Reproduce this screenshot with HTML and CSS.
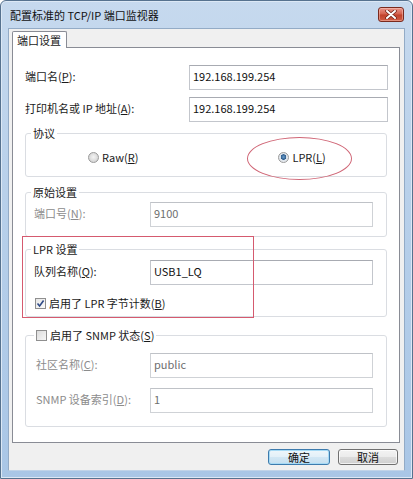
FILE: index.html
```html
<!DOCTYPE html>
<html lang="zh-CN">
<head>
<meta charset="utf-8">
<title>配置标准的 TCP/IP 端口监视器</title>
<link rel="stylesheet" href="styles.css">
</head>
<body>
<div class="window">
  <div class="titlebar">
    <span class="title">配置标准的 TCP/IP 端口监视器</span>
    <span class="close">
      <svg width="12" height="9" viewBox="0 0 12 9"><path d="M2 1 L10 8 M10 1 L2 8" stroke="#6a1d12" stroke-width="3.4" stroke-linecap="round"/><path d="M2 1 L10 8 M10 1 L2 8" stroke="#fff" stroke-width="2" stroke-linecap="round"/></svg>
    </span>
  </div>
  <div class="client">
    <div class="tabs"><div class="tab">端口设置</div></div>
    <div class="panel">
      <div class="row top-row">
        <label class="lbl wide">端口名(<u>P</u>):</label>
        <div class="input wide-input">192.168.199.254</div>
      </div>
      <div class="row top-row second">
        <label class="lbl wide">打印机名或 IP 地址(<u>A</u>):</label>
        <div class="input wide-input">192.168.199.254</div>
      </div>

      <div class="group g-proto">
        <span class="legend">协议</span>
        <div class="radios">
          <span class="opt raw"><span class="radio"></span>Raw(<u>R</u>)</span>
          <span class="opt lpr"><span class="radio on"></span>LPR(<u>L</u>)</span>
        </div>
      </div>

      <div class="group g-raw">
        <span class="legend">原始设置</span>
        <div class="row">
          <label class="lbl dis">端口号(<u>N</u>):</label>
          <div class="input dis">9100</div>
        </div>
      </div>

      <div class="group g-lpr">
        <span class="legend">LPR 设置</span>
        <div class="row">
          <label class="lbl">队列名称(<u>Q</u>):</label>
          <div class="input">USB1_LQ</div>
        </div>
        <div class="check-row">
          <span class="check on"><svg width="9" height="9" viewBox="0 0 9 9"><path d="M1.5 4.5 L3.6 7 L7.6 1.5" fill="none" stroke="#2f4a86" stroke-width="1.6"/></svg></span>启用了 LPR 字节计数(<u>B</u>)
        </div>
      </div>

      <div class="group g-snmp">
        <span class="legend check-legend"><span class="check"></span>启用了 SNMP 状态(<u>S</u>)</span>
        <div class="row">
          <label class="lbl dis">社区名称(<u>C</u>):</label>
          <div class="input dis">public</div>
        </div>
        <div class="row second">
          <label class="lbl dis">SNMP 设备索引(<u>D</u>):</label>
          <div class="input dis">1</div>
        </div>
      </div>

      <div class="mark-rect"></div>
      <div class="mark-ellipse"></div>
    </div>
    <div class="buttons">
      <button class="btn default">确定</button>
      <button class="btn">取消</button>
    </div>
  </div>
</div>
</body>
</html>
```
FILE: styles.css
```css
* { box-sizing: border-box; }
html, body { margin: 0; padding: 0; background: #fff; }
body {
  font-family: "Noto Sans CJK SC", "Noto Sans", sans-serif;
  font-size: 11px;
  color: #1a1a1a;
}
u { text-decoration: underline; text-underline-offset: 1px; }

.window {
  width: 413px;
  height: 479px;
  display: flex;
  flex-direction: column;
  background: linear-gradient(#c6d9ee, #b8d0ea 40%, #a9c6e6);
  border: 1px solid #56728f;
  border-radius: 6px 6px 0 0;
  box-shadow: inset 0 0 0 1px #dce8f5;
}

.titlebar {
  height: 27px;
  display: flex;
  align-items: center;
  justify-content: space-between;
  padding: 1px 8px 1px 9px;
}
.title { font-size: 11px; color: #111; line-height: 14px; }
.close {
  width: 26px;
  height: 15px;
  display: flex;
  align-items: center;
  justify-content: center;
  border: 1px solid #7a2a1e;
  border-radius: 3px;
  background: linear-gradient(#e8958a, #d4604b 48%, #c0412b 52%, #cf5c44);
  box-shadow: inset 0 0 0 1px rgba(255,210,200,0.45);
}

.client {
  margin: 0 7px;
  height: 443px;
  background: #f0f0f0;
  border: 1px solid #93abc6;
  border-bottom-color: #c0d3e8;
  display: flex;
  flex-direction: column;
}

.tabs {
  height: 18px;
  padding: 2px 0 0 3px;
  display: flex;
  align-items: flex-end;
}
.tab {
  height: 17px;
  margin-bottom: -1px;
  padding: 0 5px 0 4px;
  background: #fff;
  border: 1px solid #898c95;
  border-bottom: none;
  border-radius: 2px 2px 0 0;
  line-height: 16px;
  position: relative;
  z-index: 1;
}

.panel {
  position: relative;
  margin-left: 3px;
  width: 388px;
  height: 396px;
  background: #fff;
  border: 1px solid #898c95;
  padding: 17px 11px 0 12px;
}

.row { display: flex; align-items: flex-start; height: 25px; }
.row.second { margin-top: 7px; }
.lbl { width: 116px; padding-top: 3px; line-height: 16px; white-space: nowrap; }
.lbl.wide { width: 164px; }
.lbl.dis { color: #8c8c8c; }

.input {
  width: 223px;
  height: 25px;
  border: 1px solid #c3c6cc;
  border-top-color: #a8abb2;
  padding: 2px 0 0 3px;
  line-height: 16px;
  background: #fff;
  color: #111;
}
.input.wide-input { width: 199px; }
.input.dis { color: #6e6e6e; border-color: #cfd2d6; border-top-color: #bfc2c7; }

.group {
  position: relative;
  width: 362px;
  border: 1px solid #dadde2;
  border-radius: 3px;
  padding: 0 0 0 8px;
}
.legend {
  position: absolute;
  top: -9px;
  left: 5px;
  padding: 0 2px;
  background: #fff;
  line-height: 16px;
  display: flex;
  align-items: center;
}

.g-proto { margin-top: 11px; height: 44px; padding-top: 15px; padding-left: 0; }
.radios { display: flex; height: 16px; align-items: center; }
.opt { display: flex; align-items: center; line-height: 16px; }
.opt.raw { margin-left: 62px; }
.opt.lpr { margin-left: 140px; }
.radio {
  width: 11px;
  height: 11px;
  border-radius: 50%;
  border: 1px solid #9a9a9a;
  background: radial-gradient(circle at 50% 45%, #f4f4f4 0, #d6d6d6 70%);
  margin-right: 3px;
  display: inline-block;
}
.radio.on {
  background: radial-gradient(circle at 50% 45%, #6fa2cf 0, #2c5b8c 2.5px, #dde3ea 3px, #eef1f4 100%);
}

.g-raw { margin-top: 15px; height: 45px; padding-top: 9px; }
.g-lpr { margin-top: 12px; height: 68px; padding-top: 10px; }
.check-row {
  margin-top: 10px;
  height: 16px;
  display: flex;
  align-items: center;
  line-height: 16px;
  padding-left: 1px;
}
.check {
  width: 11px;
  height: 11px;
  border: 1px solid #8f8f8f;
  background: linear-gradient(135deg, #dcdcdc, #f6f6f6);
  margin-right: 3px;
  display: inline-flex;
  align-items: center;
  justify-content: center;
}
.check.on { background: linear-gradient(135deg, #e6e6e6, #fbfbfb); }

.g-snmp { margin-top: 18px; height: 92px; padding-top: 17px; }
.g-snmp .lbl { padding-left: 2px; }
.g-snmp .row.second { margin-top: 10px; }
.check-legend { left: 8px; padding-left: 2px; top: -9px; }

.mark-rect {
  position: absolute;
  left: 9px;
  top: 188px;
  width: 232px;
  height: 82px;
  border: 1px solid #d55a6f;
}
.mark-ellipse {
  position: absolute;
  left: 234px;
  top: 89px;
  width: 105px;
  height: 43px;
  border: 1px solid #d06676;
  border-radius: 50%;
}

.buttons {
  display: flex;
  justify-content: flex-end;
  gap: 8px;
  padding: 6px 6px 0 0;
}
.btn {
  font-family: inherit;
  font-size: 11px;
  width: 60px;
  height: 16px;
  padding: 0;
  line-height: 14px;
  color: #111;
  border: 1px solid #707070;
  border-radius: 3px;
  background: linear-gradient(#f3f3f3, #ebebeb 50%, #dcdcdc 50%, #cfcfcf);
  box-shadow: inset 0 0 0 1px rgba(255,255,255,0.7);
}
.btn.default {
  width: 62px;
  border-color: #3d7bad;
  background: linear-gradient(#eef6fb, #e3f0f8 50%, #d3e7f4 50%, #c4dff0);
  box-shadow: inset 0 0 0 1px #a6daf5;
}
```
